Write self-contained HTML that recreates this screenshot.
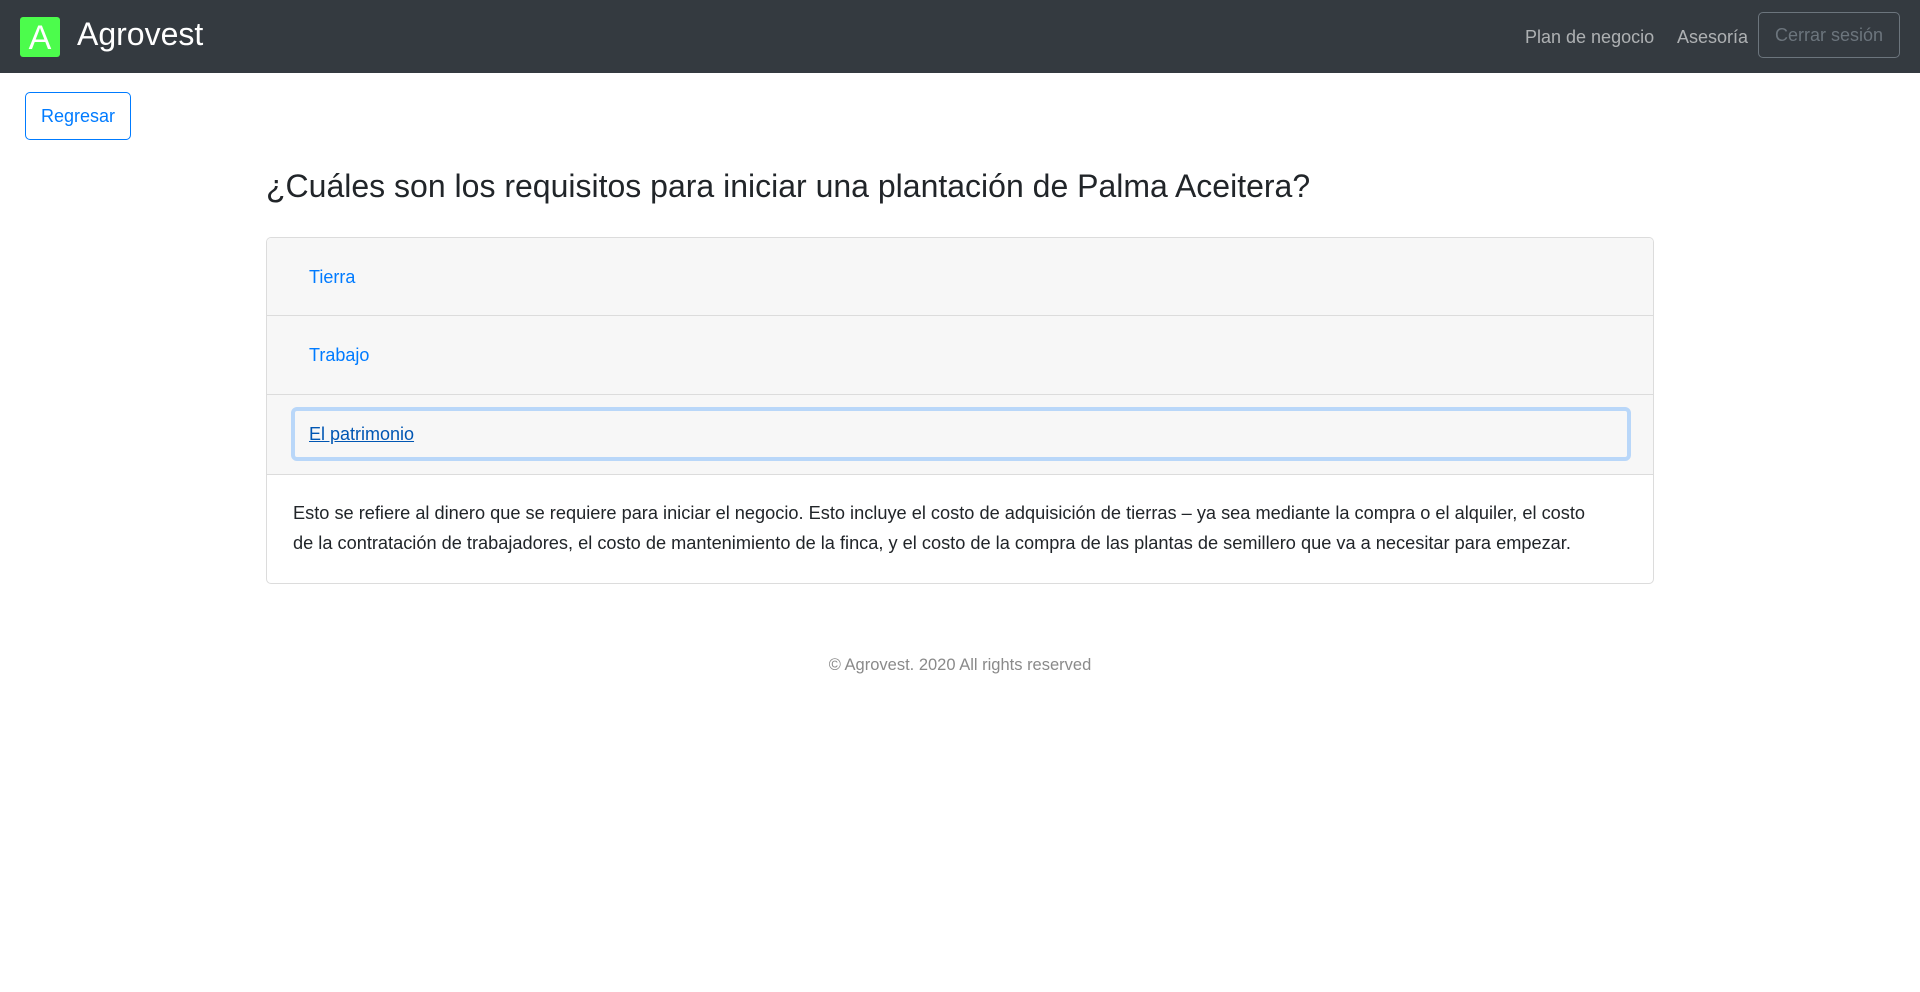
<!DOCTYPE html>
<html><head><meta charset="utf-8"><style>
*{box-sizing:border-box;margin:0;padding:0}
body{width:1920px;height:992px;background:#fff;font-family:"Liberation Sans",sans-serif;position:relative;overflow:hidden}
.nav{position:absolute;left:0;top:0;width:1920px;height:73px;background:#343a40}
.logo{position:absolute;left:20px;top:17px;width:40px;height:40px;background:#4cfc4c;border-radius:3px;color:#fff;font-size:34px;text-align:center;line-height:42px}
.brand{position:absolute;left:77px;top:12px;color:#fff;font-size:32px;line-height:44px}
.nl{position:absolute;top:24px;color:rgba(255,255,255,.6);font-size:18px;line-height:26px}
.out{position:absolute;left:1758px;top:12px;width:142px;height:46px;border:1px solid #6c757d;border-radius:5px;color:#6c757d;font-size:18px;text-align:center;line-height:44px}
.back{position:absolute;left:25px;top:92px;width:106px;height:48px;border:1px solid #007bff;border-radius:5px;color:#007bff;font-size:18px;text-align:center;line-height:46px}
h3{position:absolute;left:266px;top:164px;font-weight:normal;font-size:32px;color:#212529;line-height:44px;white-space:nowrap}
.card{position:absolute;left:266px;top:237px;width:1388px;height:347px;border:1px solid #dcdcdc;border-radius:5px;overflow:hidden}
.row{position:absolute;left:0;width:100%;background:#f7f7f7;border-bottom:1px solid #dcdcdc}
.row span{position:absolute;left:42px;color:#007bff;font-size:18px}
.focus{position:absolute;left:24px;top:12px;right:22px;height:54px;border:4px solid #b9d7f9;border-radius:6px}
.txt{position:absolute;left:26px;top:260px;width:1300px;font-size:18.2px;line-height:30px;color:#212529}
.foot{position:absolute;left:0;width:1920px;top:656px;text-align:center;color:#8a8a8a;font-size:16.5px}
</style></head><body>
<div class="nav">
<div class="logo">A</div><div class="brand">Agrovest</div>
<div class="nl" style="left:1525px">Plan de negocio</div>
<div class="nl" style="left:1677px">Asesoría</div>
<div class="out">Cerrar sesión</div>
</div>
<div class="back">Regresar</div>
<h3>¿Cuáles son los requisitos para iniciar una plantación de Palma Aceitera?</h3>
<div class="card">
<div class="row" style="top:0;height:78px"><span style="top:29px">Tierra</span></div>
<div class="row" style="top:78px;height:79px"><span style="top:29px">Trabajo</span></div>
<div class="row" style="top:157px;height:80px"><div class="focus"></div><span style="top:29px;color:#0056b3;text-decoration:underline">El patrimonio</span></div>
<div class="txt">Esto se refiere al dinero que se requiere para iniciar el negocio. Esto incluye el costo de adquisición de tierras – ya sea mediante la compra o el alquiler, el costo de la contratación de trabajadores, el costo de mantenimiento de la finca, y el costo de la compra de las plantas de semillero que va a necesitar para empezar.</div>
</div>
<div class="foot">© Agrovest. 2020 All rights reserved</div>
</body></html>
